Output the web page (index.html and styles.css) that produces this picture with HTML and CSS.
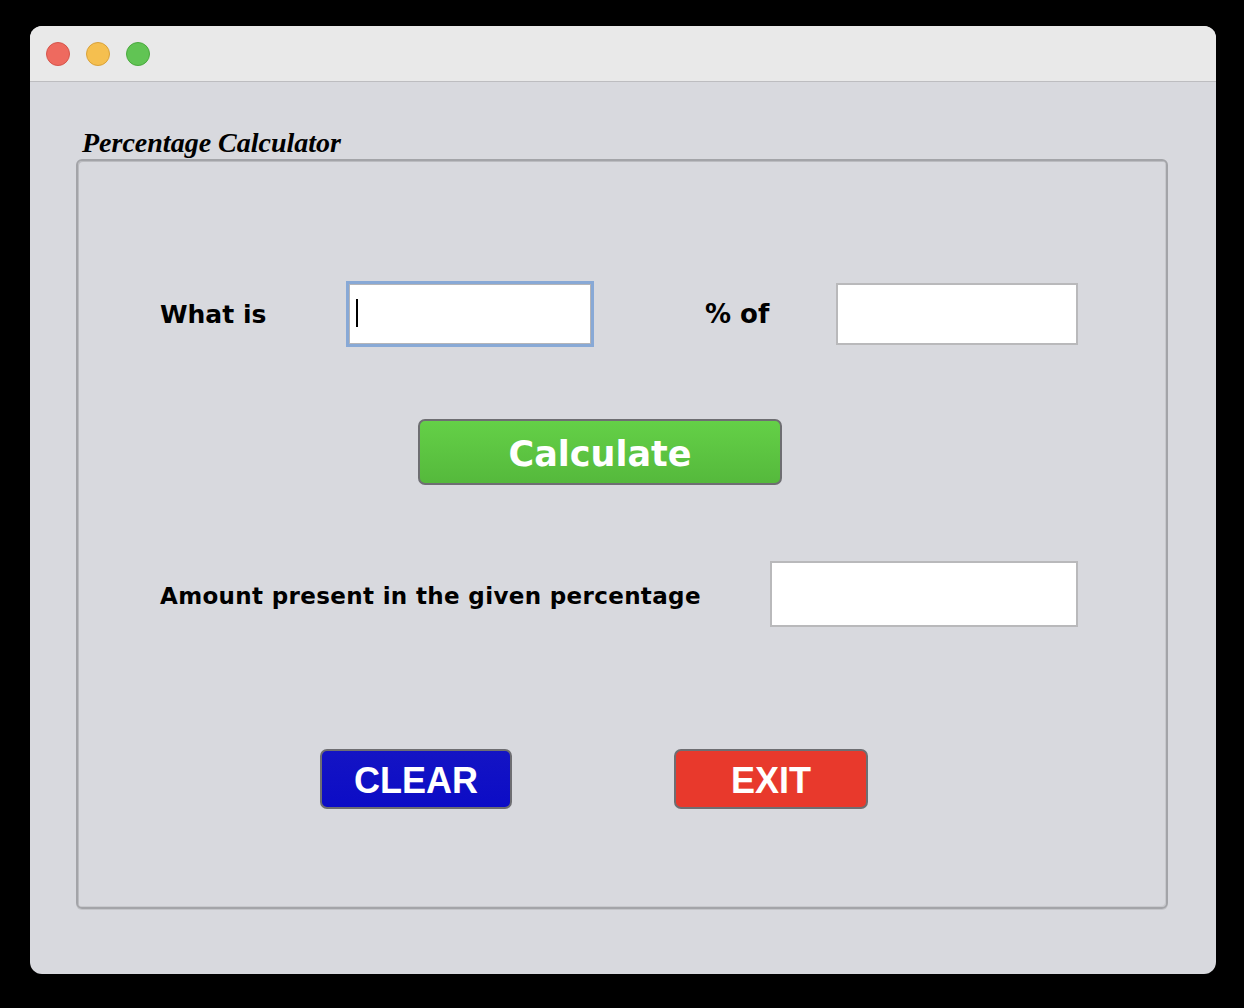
FILE: index.html
```html
<!DOCTYPE html>
<html lang="en">
<head>
  <meta charset="UTF-8" />
  <title>Percentage Calculator</title>
  <link rel="stylesheet" href="styles.css">
</head>
<body>

  <div class="window">
    <div class="titlebar">
      <span class="light red"></span>
      <span class="light yellow"></span>
      <span class="light green"></span>
    </div>

    <div class="content">
      <h1 class="title">Percentage Calculator</h1>

      <div class="group">
        <div class="row row-top">
          <label class="lbl lbl-what" for="porcentaje">What is</label>
          <div class="campo-wrap">
            <input class="campo campo-foco" type="text" id="porcentaje" />
            <span class="caret"></span>
          </div>
          <label class="lbl lbl-of" for="total">% of</label>
          <input class="campo campo-total" type="text" id="total" />
        </div>

        <button class="btn btn-calc" type="button">Calculate</button>

        <div class="row row-result">
          <label class="lbl lbl-amount" for="resultado">Amount present in the given percentage</label>
          <input class="campo campo-result" type="text" id="resultado" />
        </div>

        <div class="row row-actions">
          <button class="btn btn-clear" type="button">CLEAR</button>
          <button class="btn btn-exit" type="button">EXIT</button>
        </div>
      </div>
    </div>
  </div>

</body>
</html>
```

FILE: styles.css
```css
html, body {
  margin: 0;
  background: #000;
}
body {
  padding: 26px 28px 34px 30px;
  font-family: "DejaVu Sans", Verdana, sans-serif;
}
.window {
  width: 1186px;
  height: 948px;
  background: #d8d9de;
  border-radius: 12px;
  overflow: hidden;
  display: flex;
  flex-direction: column;
}
.titlebar {
  height: 56px;
  background: #e9e9e9;
  border-bottom: 1px solid #bdbdc0;
  display: flex;
  align-items: center;
  gap: 16px;
  padding-left: 16px;
  box-sizing: border-box;
}
.light {
  width: 24px;
  height: 24px;
  border-radius: 50%;
  box-sizing: border-box;
}
.red { background: #ee6a5f; border: 1px solid #d5554b; }
.yellow { background: #f5bf4f; border: 1px solid #d9a23a; }
.green { background: #61c454; border: 1px solid #4aa93e; }

.content {
  padding: 0 48px 0 46px;
}
.title {
  margin: 44px 0 0 6px;
  font-family: "Liberation Serif", "Times New Roman", serif;
  font-style: italic;
  font-weight: bold;
  font-size: 28px;
  line-height: 33px;
  color: #000;
}
.group {
  height: 750px;
  box-sizing: border-box;
  border: 2px solid #a3a4a8;
  border-radius: 6px;
  box-shadow: inset 1px 1px 0 #bbbcc0, inset -1px -1px 0 #c8c9cd, 0 1px 0 #c4c5c9;
  padding: 120px 0 0 82px;
  display: flex;
  flex-direction: column;
  align-items: flex-start;
}
.row {
  display: flex;
  align-items: center;
}
.lbl {
  font-weight: bold;
  font-size: 25px;
  color: #000;
}
.lbl-what { width: 186px; }
.lbl-of { width: 131px; margin-left: 111px; font-size: 26px; }
.lbl-amount { width: 610px; font-size: 23px; letter-spacing: 0.35px; padding-top: 4px; }

.campo {
  box-sizing: border-box;
  height: 62px;
  background: #fff;
  border: 2px solid #b9b9bb;
  outline: none;
  font-size: 24px;
  padding: 0 8px;
}
.campo-wrap {
  position: relative;
  display: flex;
}
.campo-foco {
  width: 248px;
  height: 66px;
  border: 3px solid #88a9d6;
  box-shadow: inset 0 0 0 1px #b5b5b8;
}
.caret {
  position: absolute;
  left: 10px;
  top: 18px;
  width: 2px;
  height: 28px;
  background: #000;
}
.campo-total { width: 242px; }
.campo-result { width: 308px; height: 66px; }

.btn {
  box-sizing: border-box;
  border: 2px solid #6e6e72;
  border-radius: 7px;
  color: #fff;
  font-weight: bold;
  cursor: pointer;
  padding: 0;
}
.btn-calc {
  width: 364px;
  height: 66px;
  margin: 72px 0 0 258px;
  padding-top: 4px;
  background: linear-gradient(#64d047, #55b93c);
  font-family: "DejaVu Sans", Verdana, sans-serif;
  font-size: 35px;
}
.row-result { margin-top: 76px; }
.row-actions {
  margin: 122px 0 0 160px;
  gap: 162px;
}
.btn-clear, .btn-exit {
  height: 60px;
  padding-top: 3px;
  font-family: "Liberation Sans", Arial, sans-serif;
  font-size: 36px;
}
.btn-clear {
  width: 192px;
  background: linear-gradient(#1414c4, #0c0cc6);
}
.btn-exit {
  width: 194px;
  background: #e8392c;
}
```
